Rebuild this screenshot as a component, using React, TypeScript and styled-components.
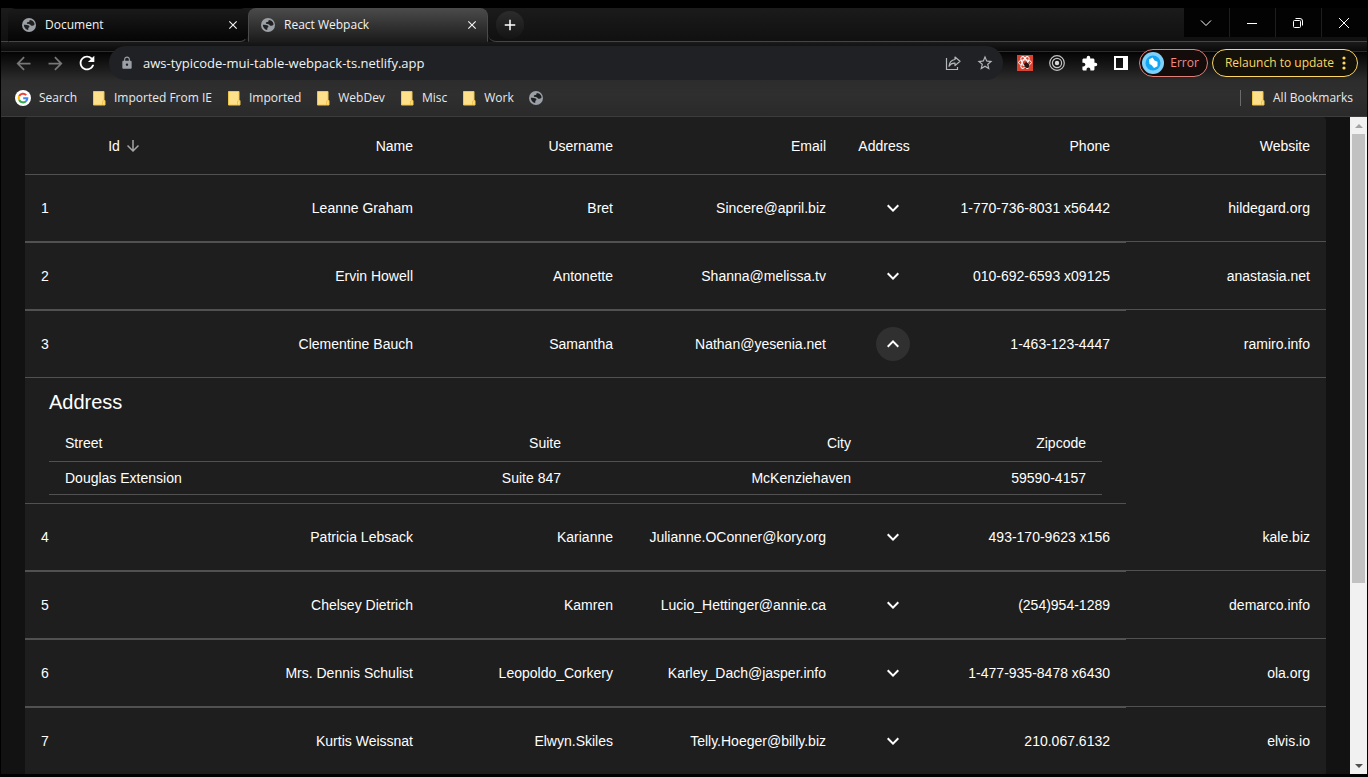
import React, { Fragment, useState } from "react";
import styled, { createGlobalStyle } from "styled-components";
import {
  MdAdd,
  MdArrowBack,
  MdArrowDownward,
  MdArrowForward,
  MdClose,
  MdExtension,
  MdKeyboardArrowDown,
  MdKeyboardArrowUp,
  MdLock,
  MdRefresh,
  MdStarBorder,
} from "react-icons/md";

const chromeFont = `"Open Sans", "Noto Sans", sans-serif`;
const pageFont = `"Liberation Sans", Arial, sans-serif`;

const GlobalStyle = createGlobalStyle`
  *, *::before, *::after { box-sizing: border-box; }
  body { margin: 0; background: #000; }
  button { font: inherit; color: inherit; background: none; border: 0; padding: 0; cursor: pointer; }
  svg { display: block; flex: none; }
`;

const Browser = styled.div`
  display: flex;
  flex-direction: column;
  height: 100vh;
  padding: 8px 1px 3px;
  background: #000;
  color: #e8eaed;
  font-family: ${chromeFont};
  font-size: 12px;
  line-height: 16px;
`;

/* ---------- tab strip ---------- */

const TabStrip = styled.header`
  display: flex;
  flex: none;
  height: 34px;
  background: linear-gradient(#1b1b1b, #101010);
`;

const StripEdge = styled.div<{ $grow?: boolean }>`
  flex: ${(p) => (p.$grow ? "1" : "0 0 7px")};
  border-bottom: 1px solid #454545;
`;

const Tab = styled.div<{ $active?: boolean }>`
  display: flex;
  align-items: center;
  flex: 0 1 240px;
  min-width: 0;
  padding: ${(p) => (p.$active ? "0 8px 0 12px" : "0 7px 0 13px")};
  border: 1px solid ${(p) => (p.$active ? "#4a4a4a" : "transparent")};
  border-bottom-color: ${(p) => (p.$active ? "#1c1c1c" : "#454545")};
  border-radius: ${(p) => (p.$active ? "8px 8px 0 0" : "8px 8px 8px 0")};
  background: ${(p) =>
    p.$active ? "linear-gradient(#4a4a4a, #1c1c1c)" : "linear-gradient(#1a1a1a, #050505)"};
  color: #f1f3f4;
`;

const TabTitle = styled.span`
  flex: 1;
  margin-left: 9px;
  overflow: hidden;
  white-space: nowrap;
`;

const NewTabArea = styled.div`
  display: flex;
  align-items: center;
  flex: none;
  padding: 0 8px;
  border-bottom: 1px solid #454545;
  border-bottom-left-radius: 8px;
`;

const NewTabButton = styled.button`
  display: grid;
  place-items: center;
  width: 28px;
  height: 28px;
  border-radius: 50%;
  background: linear-gradient(#2c2c2c, #141414);
  color: #fff;
  svg { stroke: currentColor; }
`;

const CloseButton = styled.button`
  svg { stroke: currentColor; }
`;

const WindowControls = styled.div`
  display: flex;
  flex: none;
  border-bottom: 1px solid #454545;
`;

const WindowButton = styled.button`
  display: grid;
  place-items: center;
  width: 46px;
  height: 29px;
  padding-right: 1px;
  border-right: 1px solid #1e1e1e;
  background: #030303;
  color: #fff;
  &:last-child { width: 45px; border-right: 0; }
`;

/* ---------- toolbar ---------- */

const Toolbar = styled.div`
  display: flex;
  align-items: center;
  flex: none;
  height: 38px;
  padding: 4px 9px 0 11px;
  background: linear-gradient(#1a1a1a 0, #0a0a0a 9px, #2c2c2c 9px, #2c2c2c 10px, #040404 10px, #2b2b2b 38px);
`;

const NavButton = styled.button<{ $dim?: boolean }>`
  display: grid;
  place-items: center;
  flex: 0 0 22px;
  height: 22px;
  margin-right: 10px;
  color: ${(p) => (p.$dim ? "#777" : "#fff")};
`;

const Omnibox = styled.form`
  display: flex;
  align-items: center;
  flex: 1;
  min-width: 0;
  height: 34px;
  margin-left: 1px;
  padding: 0 9px 0 11px;
  border-radius: 17px;
  background: #202124;
  color: #9aa0a6;
`;

const UrlInput = styled.input`
  flex: 1;
  min-width: 0;
  margin-left: 9px;
  padding: 0;
  border: 0;
  outline: 0;
  background: none;
  color: #f1f3f4;
  font-family: ${chromeFont};
  font-size: 13px;
  line-height: 20px;
`;

const OmniboxAction = styled.button`
  display: grid;
  place-items: center;
  width: 18px;
  height: 18px;
  margin-left: 14px;
  color: #b4b7ba;
`;

const Extensions = styled.div`
  display: flex;
  align-items: center;
  gap: 16px;
  flex: none;
  margin: 0 10px 0 14px;
`;

const ExtensionButton = styled.button`
  display: grid;
  place-items: center;
  width: 16px;
  height: 16px;
  color: #fff;
`;

const Pill = styled.button<{ $tone: "error" | "update" }>`
  display: flex;
  align-items: center;
  flex: none;
  gap: ${(p) => (p.$tone === "error" ? "6px" : "8px")};
  height: 28px;
  padding: ${(p) => (p.$tone === "error" ? "0 8px 0 2px" : "0 11px 0 12px")};
  margin-left: ${(p) => (p.$tone === "error" ? "0" : "4px")};
  border: 1px solid ${(p) => (p.$tone === "error" ? "#e08079" : "#fdd663")};
  border-radius: 14px;
  background: ${(p) => (p.$tone === "error" ? "#140c0b" : "#14110a")};
  color: ${(p) => (p.$tone === "error" ? "#f28b82" : "#fdd663")};
`;

/* ---------- bookmarks ---------- */

const BookmarksBar = styled.nav`
  display: flex;
  align-items: center;
  flex: none;
  height: 37px;
  padding: 0 14px;
  border-bottom: 1px solid #3c3c3c;
  background: linear-gradient(#2c2c2c, #2f2f2f 40%, #2a2a2a);
`;

const Bookmark = styled.button<{ $push?: boolean }>`
  display: flex;
  align-items: center;
  gap: 8px;
  flex: none;
  height: 16px;
  margin-right: ${(p) => (p.$push ? "0" : "15px")};
  padding-left: ${(p) => (p.$push ? "10px" : "0")};
  margin-left: ${(p) => (p.$push ? "auto" : "0")};
  border-left: ${(p) => (p.$push ? "1px solid #6b6b6b" : "0")};
  white-space: nowrap;
`;

/* ---------- page ---------- */

const Viewport = styled.div`
  display: flex;
  flex: 1;
  min-height: 0;
  background: #121212;
`;

const Page = styled.main`
  flex: 1;
  min-width: 0;
  padding: 0 24px;
  overflow: hidden;
  color: #fff;
  font-family: ${pageFont};
  font-size: 14px;
  line-height: 20px;
`;

const Paper = styled.section`
  border-radius: 4px;
  background: #1e1e1e;
`;

const Table = styled.table`
  width: 100%;
  table-layout: fixed;
  border-spacing: 0;
`;

const HeadCell = styled.th<{ $align?: string }>`
  height: 58px;
  padding: 16px;
  border-bottom: 1px solid #515151;
  font-weight: 400;
  text-align: ${(p) => p.$align ?? "right"};
`;

const SortLabel = styled.button`
  display: inline-flex;
  align-items: center;
  svg { margin: 0 4px; color: #a5a5a5; }
`;

const Cell = styled.td`
  padding: 16px;
  border-bottom: 1px solid #515151;
  text-align: right;
`;

const RowHeadCell = styled.th`
  padding: 16px;
  border-bottom: 1px solid #515151;
  font-weight: 400;
  text-align: left;
`;

const ExpandButton = styled.button<{ $open: boolean }>`
  display: flex;
  align-items: center;
  justify-content: center;
  width: 34px;
  height: 34px;
  margin-left: auto;
  border-radius: 50%;
  background: ${(p) => (p.$open ? "#303030" : "transparent")};
`;

const DetailCell = styled.td`
  padding: 0 16px;
  border-bottom: 1px solid #515151;
`;

const DetailBox = styled.div`
  padding: 8px;
`;

const DetailTitle = styled.h2`
  margin: 0 0 7px;
  font-size: 20px;
  font-weight: 400;
  line-height: 32px;
`;

const SmallHead = styled.th`
  padding: 8px 16px;
  border-bottom: 1px solid #515151;
  font-weight: 400;
  text-align: right;
  &:first-child { text-align: left; }
`;

const SmallCell = styled.td`
  padding: 6px 16px;
  border-bottom: 1px solid #515151;
  text-align: right;
  &:first-child { text-align: left; }
`;

const ScrollBar = styled.div`
  display: flex;
  flex-direction: column;
  flex: 0 0 17px;
  background: #f1f1f1;
`;

const ScrollArrow = styled.button`
  display: grid;
  place-items: center;
  flex: 0 0 17px;
`;

const ScrollTrack = styled.div`
  flex: 1;
  padding: 0 2px;
`;

const ScrollThumb = styled.div`
  height: 72%;
  background: #c1c1c1;
`;

/* ---------- icons ---------- */

const GlobeIcon = () => (
  <svg width="14" height="14" viewBox="0 0 14 14">
    <circle cx="7" cy="7" r="7" fill="#9aa0a6" />
    <path
      d="M12.400 5.200C11.500 3.200 9.600 2 7.600 2c.3 1.500-.6 2-1.600 2.100C5 4.300 4.700 5 4.900 5.600c.3.700 1.600.4 2.500.6 1.100.3 1.300 1.300 2.100 1.600.9.300 2.200-.6 2.900-.8z"
      fill="#202020"
    />
    <path
      d="M1.800 6.800c1.500-.3 3.600-.1 4.900.6 1.300.8.600 1.700 0 2.200-.6.600-.3 1.500-.5 2.500C3.800 11.800 1.900 9.500 1.800 6.800z"
      fill="#202020"
    />
  </svg>
);

const FolderIcon = () => (
  <svg width="14" height="16" viewBox="0 0 14 16">
    <path d="M1.500 1.500h10.500v9h1v4.500H1.500z" fill="#ffe08a" />
    <path d="M1.500 1.500h10.500v9h1v4.500H1.500z" fill="none" stroke="#efc550" />
    <path d="M10.500 15v-4h1.500" fill="none" stroke="#efc550" />
  </svg>
);

const GoogleIcon = () => (
  <svg width="16" height="16" viewBox="0 0 16 16">
    <circle cx="8" cy="8" r="8" fill="#fff" />
    <g fill="none" strokeWidth="2.100">
      <path d="M11.200 5.100A4.300 4.300 0 0 0 4.200 6" stroke="#ea4335" />
      <path d="M4.200 6a4.300 4.300 0 0 0 0 4" stroke="#fbbc05" />
      <path d="M4.200 10a4.300 4.300 0 0 0 6.800 1.200" stroke="#34a853" />
      <path d="M11 11.200A4.300 4.300 0 0 0 12.300 8.200H8.200" stroke="#4285f4" />
    </g>
  </svg>
);

const ShareIcon = () => (
  <svg width="16" height="16" viewBox="0 0 16 16" fill="none" stroke="currentColor" strokeWidth="1.200">
    <path d="M1.500 3v11.500h11V12" />
    <path d="M10 2l5 4.300-5 4.300V8.200C7.300 8 5.300 9 4 11.300 4.300 7.500 6.500 5 10 4.500z" strokeLinejoin="round" />
  </svg>
);

const ReactDevIcon = () => (
  <svg width="16" height="16" viewBox="0 0 16 16">
    <rect width="16" height="16" fill="#d9432f" />
    <g fill="none" stroke="#fff" strokeWidth="1">
      <ellipse cx="8" cy="7.500" rx="6.500" ry="2.600" />
      <ellipse cx="8" cy="7.500" rx="6.500" ry="2.600" transform="rotate(60 8 7.500)" />
      <ellipse cx="8" cy="7.500" rx="6.500" ry="2.600" transform="rotate(120 8 7.500)" />
    </g>
    <ellipse cx="9.800" cy="10.200" rx="2.200" ry="3" fill="#2a1512" transform="rotate(-35 9.800 10.200)" />
    <path d="M6.500 9l6 3M8.500 13.500l3-6M7 12l5.500-3" stroke="#2a1512" strokeWidth=".8" />
  </svg>
);

const TargetIcon = () => (
  <svg width="16" height="16" viewBox="0 0 16 16" fill="none" stroke="#c4c4c4" strokeWidth="1.200">
    <circle cx="8" cy="8" r="7.300" />
    <circle cx="8" cy="8" r="4.600" />
    <circle cx="8" cy="8" r="2.200" fill="#d8d8d8" stroke="none" />
  </svg>
);

const SidePanelIcon = () => (
  <svg width="14" height="14" viewBox="0 0 14 14">
    <path d="M0 0h14v14H0zM2 2v10h7V2z" fill="#fff" fillRule="evenodd" />
  </svg>
);

const AvatarIcon = () => (
  <svg width="22" height="22" viewBox="0 0 22 22">
    <circle cx="11" cy="11" r="11" fill="#7fd0fa" />
    <circle cx="11" cy="11" r="7.500" fill="#12a5f4" />
    <path d="M7 7.500l3.500-2 2 3 3 1.200v4.500L12 16l-2.500-3-2-1z" fill="#fff" />
  </svg>
);

const MoreDotsIcon = () => (
  <svg width="4" height="14" viewBox="0 0 4 14" fill="currentColor">
    <circle cx="2" cy="2" r="1.600" />
    <circle cx="2" cy="7" r="1.600" />
    <circle cx="2" cy="12" r="1.600" />
  </svg>
);

type WindowGlyphName = "menu" | "minimize" | "restore" | "close";

const windowGlyphs: Record<WindowGlyphName, string> = {
  menu: "M1 3.500l5 5 5-5",
  minimize: "M1 6.500h10",
  restore: "M1.500 4.500a1 1 0 0 1 1-1h5a1 1 0 0 1 1 1v5a1 1 0 0 1-1 1h-5a1 1 0 0 1-1-1zM3.500 1.500h4.500a2.500 2.500 0 0 1 2.500 2.500v4.500",
  close: "M1 1l10 10M11 1L1 11",
};

const WindowGlyph = ({ name }: { name: WindowGlyphName }) => (
  <svg width="12" height="12" viewBox="0 0 12 12" fill="none" stroke="currentColor" strokeWidth="1">
    <path d={windowGlyphs[name]} />
  </svg>
);

/* ---------- data ---------- */

const folders = ["Imported From IE", "Imported", "WebDev", "Misc", "Work"];

interface Address {
  street: string;
  suite: string;
  city: string;
  zipcode: string;
}

interface User {
  id: number;
  name: string;
  username: string;
  email: string;
  phone: string;
  website: string;
  address: Address;
}

const makeUser = (
  id: number,
  name: string,
  username: string,
  email: string,
  phone: string,
  website: string,
  address: [string, string, string, string]
): User => ({
  id,
  name,
  username,
  email,
  phone,
  website,
  address: { street: address[0], suite: address[1], city: address[2], zipcode: address[3] },
});

const users: User[] = [
  makeUser(1, "Leanne Graham", "Bret", "Sincere@april.biz", "1-770-736-8031 x56442", "hildegard.org", ["Kulas Light", "Apt. 556", "Gwenborough", "92998-3874"]),
  makeUser(2, "Ervin Howell", "Antonette", "Shanna@melissa.tv", "010-692-6593 x09125", "anastasia.net", ["Victor Plains", "Suite 879", "Wisokyburgh", "90566-7771"]),
  makeUser(3, "Clementine Bauch", "Samantha", "Nathan@yesenia.net", "1-463-123-4447", "ramiro.info", ["Douglas Extension", "Suite 847", "McKenziehaven", "59590-4157"]),
  makeUser(4, "Patricia Lebsack", "Karianne", "Julianne.OConner@kory.org", "493-170-9623 x156", "kale.biz", ["Hoeger Mall", "Apt. 692", "South Elvis", "53919-4257"]),
  makeUser(5, "Chelsey Dietrich", "Kamren", "Lucio_Hettinger@annie.ca", "(254)954-1289", "demarco.info", ["Skiles Walks", "Suite 351", "Roscoeview", "33263"]),
  makeUser(6, "Mrs. Dennis Schulist", "Leopoldo_Corkery", "Karley_Dach@jasper.info", "1-477-935-8478 x6430", "ola.org", ["Norberto Crossing", "Apt. 950", "South Christy", "23505-1337"]),
  makeUser(7, "Kurtis Weissnat", "Elwyn.Skiles", "Telly.Hoeger@billy.biz", "210.067.6132", "elvis.io", ["Rex Trail", "Suite 280", "Howemouth", "58804-1099"]),
];

const columnWidths = [204, 200, 200, 213, 84, 200, 200];
const addressWidths = [288, 240, 290, 235];

const Columns = ({ widths }: { widths: number[] }) => (
  <colgroup>
    {widths.map((width, i) => (
      <col key={i} width={width} />
    ))}
  </colgroup>
);

const AddressDetail = ({ address }: { address: Address }) => (
  <DetailBox>
    <DetailTitle>Address</DetailTitle>
    <Table>
      <Columns widths={addressWidths} />
      <thead>
        <tr>
          <SmallHead scope="col">Street</SmallHead>
          <SmallHead scope="col">Suite</SmallHead>
          <SmallHead scope="col">City</SmallHead>
          <SmallHead scope="col">Zipcode</SmallHead>
        </tr>
      </thead>
      <tbody>
        <tr>
          <SmallCell>{address.street}</SmallCell>
          <SmallCell>{address.suite}</SmallCell>
          <SmallCell>{address.city}</SmallCell>
          <SmallCell>{address.zipcode}</SmallCell>
        </tr>
      </tbody>
    </Table>
  </DetailBox>
);

const UsersTable = () => {
  const [openId, setOpenId] = useState<number | null>(3);
  return (
    <Table>
      <Columns widths={columnWidths} />
      <thead>
        <tr>
          <HeadCell scope="col" $align="center">
            <SortLabel type="button">
              Id
              <MdArrowDownward size={18} />
            </SortLabel>
          </HeadCell>
          <HeadCell scope="col">Name</HeadCell>
          <HeadCell scope="col">Username</HeadCell>
          <HeadCell scope="col">Email</HeadCell>
          <HeadCell scope="col" $align="center">Address</HeadCell>
          <HeadCell scope="col">Phone</HeadCell>
          <HeadCell scope="col">Website</HeadCell>
        </tr>
      </thead>
      <tbody>
        {users.map((user) => {
          const open = user.id === openId;
          return (
            <Fragment key={user.id}>
              <tr>
                <RowHeadCell scope="row">{user.id}</RowHeadCell>
                <Cell>{user.name}</Cell>
                <Cell>{user.username}</Cell>
                <Cell>{user.email}</Cell>
                <Cell>
                  <ExpandButton
                    type="button"
                    aria-label="Expand row"
                    aria-expanded={open}
                    $open={open}
                    onClick={() => setOpenId(open ? null : user.id)}
                  >
                    {open ? <MdKeyboardArrowUp size={24} /> : <MdKeyboardArrowDown size={24} />}
                  </ExpandButton>
                </Cell>
                <Cell>{user.phone}</Cell>
                <Cell>{user.website}</Cell>
              </tr>
              <tr>
                <DetailCell colSpan={6}>{open && <AddressDetail address={user.address} />}</DetailCell>
              </tr>
            </Fragment>
          );
        })}
      </tbody>
    </Table>
  );
};

const BrowserTab = ({ title, active }: { title: string; active?: boolean }) => (
  <Tab $active={active}>
    <GlobeIcon />
    <TabTitle>{title}</TabTitle>
    <CloseButton type="button" aria-label={`Close ${title}`}>
      <MdClose size={14} />
    </CloseButton>
  </Tab>
);

export default function App() {
  return (
    <Browser>
      <GlobalStyle />
      <TabStrip>
        <StripEdge />
        <BrowserTab title="Document" />
        <BrowserTab title="React Webpack" active />
        <NewTabArea>
          <NewTabButton type="button" aria-label="New tab">
            <MdAdd size={18} />
          </NewTabButton>
        </NewTabArea>
        <StripEdge $grow />
        <WindowControls>
          {(Object.keys(windowGlyphs) as WindowGlyphName[]).map((name) => (
            <WindowButton key={name} type="button" aria-label={name}>
              <WindowGlyph name={name} />
            </WindowButton>
          ))}
        </WindowControls>
      </TabStrip>

      <Toolbar>
        <NavButton type="button" aria-label="Back" $dim>
          <MdArrowBack size={21} />
        </NavButton>
        <NavButton type="button" aria-label="Forward" $dim>
          <MdArrowForward size={21} />
        </NavButton>
        <NavButton type="button" aria-label="Reload">
          <MdRefresh size={22} />
        </NavButton>
        <Omnibox onSubmit={(e) => e.preventDefault()}>
          <MdLock size={14} />
          <UrlInput aria-label="Address bar" defaultValue="aws-typicode-mui-table-webpack-ts.netlify.app" />
          <OmniboxAction type="button" aria-label="Share">
            <ShareIcon />
          </OmniboxAction>
          <OmniboxAction type="button" aria-label="Bookmark this page">
            <MdStarBorder size={18} />
          </OmniboxAction>
        </Omnibox>
        <Extensions>
          <ExtensionButton type="button" aria-label="React Developer Tools">
            <ReactDevIcon />
          </ExtensionButton>
          <ExtensionButton type="button" aria-label="Recorder">
            <TargetIcon />
          </ExtensionButton>
          <ExtensionButton type="button" aria-label="Extensions">
            <MdExtension size={17} />
          </ExtensionButton>
          <ExtensionButton type="button" aria-label="Side panel">
            <SidePanelIcon />
          </ExtensionButton>
        </Extensions>
        <Pill type="button" $tone="error">
          <AvatarIcon />
          Error
        </Pill>
        <Pill type="button" $tone="update">
          Relaunch to update
          <MoreDotsIcon />
        </Pill>
      </Toolbar>

      <BookmarksBar>
        <Bookmark type="button">
          <GoogleIcon />
          Search
        </Bookmark>
        {folders.map((name) => (
          <Bookmark key={name} type="button">
            <FolderIcon />
            {name}
          </Bookmark>
        ))}
        <Bookmark type="button" aria-label="Untitled bookmark">
          <GlobeIcon />
        </Bookmark>
        <Bookmark type="button" $push>
          <FolderIcon />
          All Bookmarks
        </Bookmark>
      </BookmarksBar>

      <Viewport>
        <Page>
          <Paper>
            <UsersTable />
          </Paper>
        </Page>
        <ScrollBar>
          <ScrollArrow type="button" aria-label="Scroll up">
            <svg width="8" height="4" viewBox="0 0 8 4">
              <path d="M0 4l4-4 4 4z" fill="#a3a3a3" />
            </svg>
          </ScrollArrow>
          <ScrollTrack>
            <ScrollThumb />
          </ScrollTrack>
          <ScrollArrow type="button" aria-label="Scroll down">
            <svg width="8" height="4" viewBox="0 0 8 4">
              <path d="M0 0l4 4 4-4z" fill="#505050" />
            </svg>
          </ScrollArrow>
        </ScrollBar>
      </Viewport>
    </Browser>
  );
}
